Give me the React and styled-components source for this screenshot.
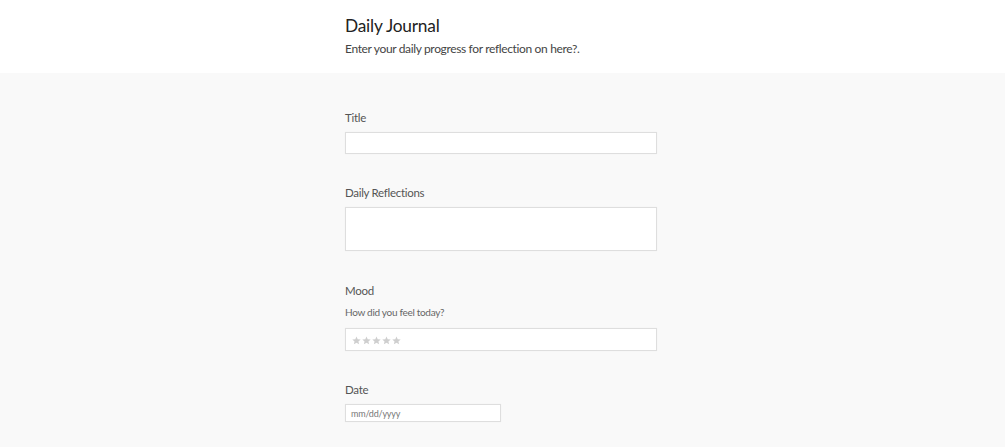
import React from "react";
import styled, { createGlobalStyle } from "styled-components";

const Global = createGlobalStyle`
  html, body { margin: 0; padding: 0; background: #f9f9f9; }
  body { font-family: "Lato", "Open Sans", sans-serif; }
  * { box-sizing: border-box; }
`;

const Header = styled.header`
  background: #ffffff;
  height: 73px;
  display: flex;
  justify-content: center;
`;

const Column = styled.div`
  width: 312px;
  margin-right: 3px;
  display: flex;
  flex-direction: column;
`;

const HeaderInner = styled(Column)`
  padding-top: 13px;
`;

const Title = styled.h1`
  margin: 0;
  font-family: "Lato", sans-serif;
  font-weight: 400;
  font-size: 17.3px;
  letter-spacing: -0.2px;
  line-height: 26px;
  color: #222;
`;

const Subtitle = styled.p`
  margin: 1px 0 0;
  font-size: 12px;
  letter-spacing: -0.35px;
  line-height: 18px;
  color: #444;
`;

const Main = styled.main`
  display: flex;
  justify-content: center;
  padding-top: 36px;
  padding-bottom: 20px;
`;

const Form = styled(Column)``;

const Field = styled.div`
  display: flex;
  flex-direction: column;
  margin-bottom: ${(p) => p.$gap || 30}px;
`;

const Label = styled.label`
  font-size: 11.5px;
  letter-spacing: -0.3px;
  line-height: 18px;
  color: #555;
  margin-bottom: ${(p) => (p.$tight ? 0 : 5)}px;
`;

const Help = styled.div`
  font-size: 10px;
  letter-spacing: -0.3px;
  line-height: 14px;
  color: #666;
  margin-top: 5px;
  margin-bottom: 9px;
`;

const Box = styled.div`
  background: #fff;
  border: 1px solid #dedede;
  box-shadow: 0 0 1px rgba(0, 0, 0, 0.06);
  height: ${(p) => p.$h}px;
  width: ${(p) => p.$w || "100%"};
  display: flex;
  align-items: center;
  padding: 0 5px;
`;

const Stars = styled.div`
  display: flex;
  gap: 1px;
  padding-left: 1px;
  margin-top: 1px;
`;

const Star = () => (
  <svg width="9" height="9" viewBox="0 0 24 24">
    <path
      d="M12 1l3.2 7.4 8 .7-6.1 5.3 1.9 7.9L12 18 4.9 22.3l1.9-7.9L.8 9.1l8-.7z"
      fill="#cfcfcf"
    />
  </svg>
);

const DateText = styled.span`
  font-size: 9px;
  letter-spacing: -0.2px;
  color: #777;
`;

export default function App() {
  return (
    <>
      <Global />
      <Header>
        <HeaderInner>
          <Title>Daily Journal</Title>
          <Subtitle>Enter your daily progress for reflection on here?.</Subtitle>
        </HeaderInner>
      </Header>
      <Main>
        <Form>
          <Field>
            <Label>Title</Label>
            <Box $h={22} />
          </Field>
          <Field $gap={31}>
            <Label>Daily Reflections</Label>
            <Box $h={44} />
          </Field>
          <Field>
            <Label $tight>Mood</Label>
            <Help>How did you feel today?</Help>
            <Box $h={23}>
              <Stars>
                {[0, 1, 2, 3, 4].map((i) => (
                  <Star key={i} />
                ))}
              </Stars>
            </Box>
          </Field>
          <Field $gap={20}>
            <Label>Date</Label>
            <Box $h={18} $w="156px">
              <DateText>mm/dd/yyyy</DateText>
            </Box>
          </Field>
        </Form>
      </Main>
    </>
  );
}
